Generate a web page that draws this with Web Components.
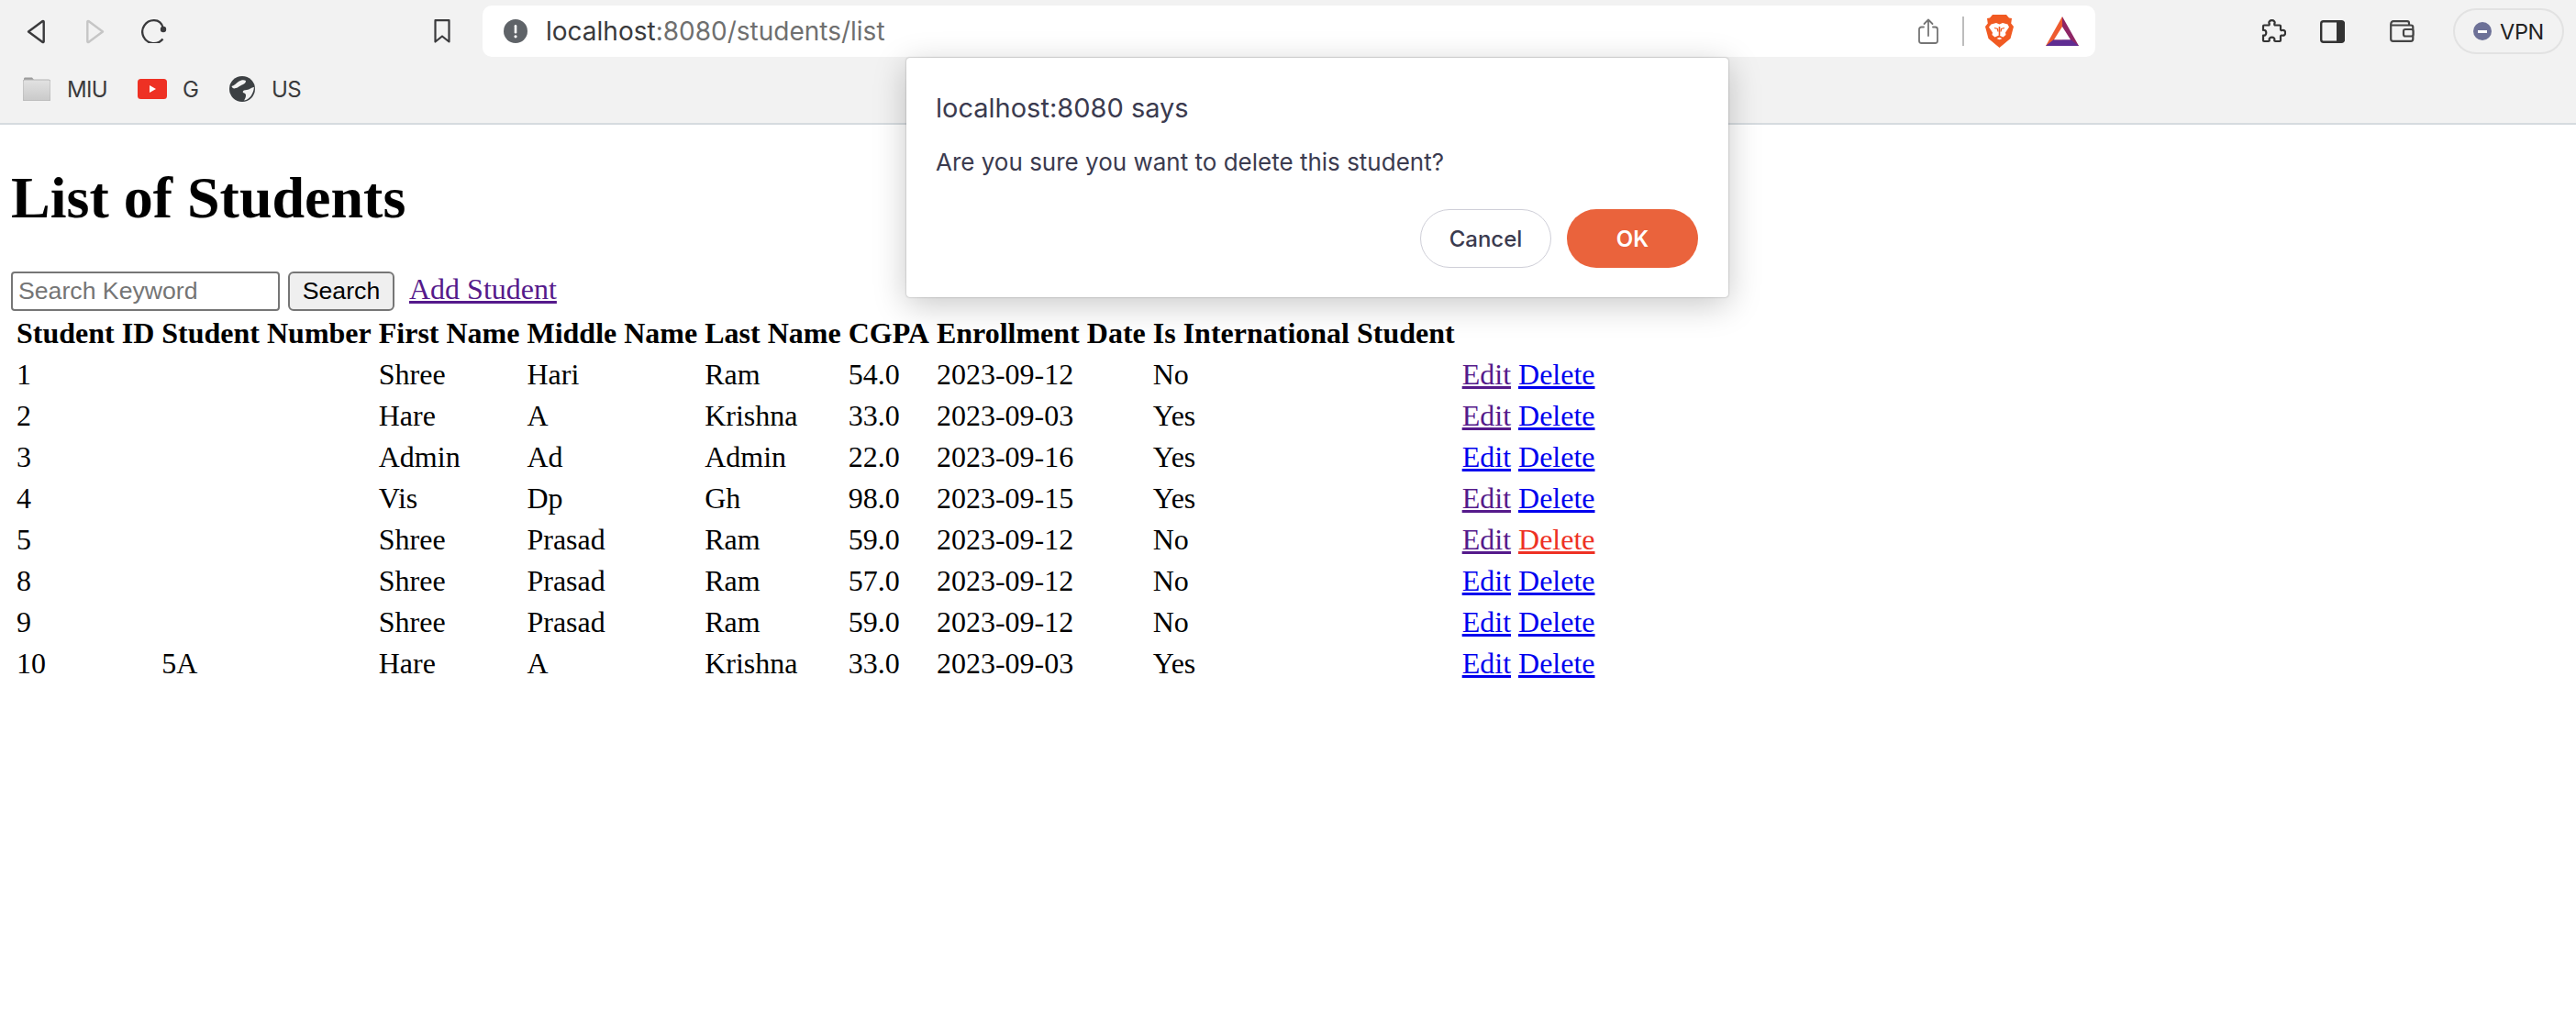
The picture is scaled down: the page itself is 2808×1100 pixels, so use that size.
<!DOCTYPE html>
<html lang="en">
<head>
<meta charset="utf-8">
<title>List of Students</title>
<style>
html, body { margin: 0; padding: 0; background: #fff; }
body { width: 2808px; height: 1100px; overflow: hidden; position: relative; }
</style>
</head>
<body>
<browser-toolbar></browser-toolbar>
<bookmark-bar></bookmark-bar>
<students-page></students-page>
<confirm-dialog origin="localhost:8080 says" message="Are you sure you want to delete this student?"></confirm-dialog>

<script>
// iconos dibujados a mano, viewBox en pixeles reales
const ICONS = {
    back: [20, 27, '<path d="M17.500 2 2 13.500 17.500 25c.6.3 1.200 0 1.200-.7V2.700c0-.7-.6-1-1.200-.7Z" fill="none" stroke="#3a3a3c" stroke-width="2.400" stroke-linejoin="round"/>'],
    forward: [21, 27, '<path d="M3.500 2 19 13.500 3.500 25c-.6.3-1.200 0-1.200-.7V2.700c0-.7.6-1 1.200-.7Z" fill="none" stroke="#c6c6c6" stroke-width="2.400" stroke-linejoin="round"/>'],
    reload: [28, 26, '<path d="M23.500 21.500A12.500 12.500 0 1 1 14 1.200c5 0 8.500 3 10 8.800" fill="none" stroke="#3a3a3c" stroke-width="2.300"/><circle cx="24" cy="11" r="3.200" fill="#3a3a3c"/>'],
    bookmark: [18, 26, '<path d="M1.500 1.200h15v23.300L9 18.500l-7.500 6Z" fill="none" stroke="#3a3a3c" stroke-width="2.200" stroke-linejoin="round"/>'],
    alert: [26, 26, '<circle cx="13" cy="13" r="13" fill="#5f6368"/><rect x="11.700" y="6" width="2.600" height="9.500" rx="1.300" fill="#fff"/><circle cx="13" cy="18.800" r="1.600" fill="#fff"/>'],
    share: [22, 28, '<path d="M6 9.500H3.500C2.100 9.500 1 10.600 1 12v12.500C1 26 2.100 27 3.500 27h15c1.400 0 2.500-1 2.500-2.500V12c0-1.400-1.100-2.500-2.500-2.500H16M11 19V1.500M6.500 6 11 1.500 15.500 6" fill="none" stroke="#757575" stroke-width="1.800" stroke-linecap="round" stroke-linejoin="round"/>'],
    brave: [31, 36, '<path d="M8 0h15l3 3.500 3 .5-.8 5.500L31 13l-3.500 13L15.500 36 3.500 26 0 13l2.800-3.500L2 4l3-.5Z" fill="#f15a22"/><path d="M6.500 10.500 12 9l3.500 1.500L19 9l5.500 1.500 1.500 3-4 6 .5 2.500-3 2.500-4.500-2-4.500 2-3-2.500.5-2.500-4-6Z" fill="#fff"/><path d="M10 14.500l3.500 1 .5 3M21 14.500l-3.500 1-.5 3" fill="none" stroke="#f15a22" stroke-width="1.300"/><path d="M14.700 13h1.600v9.500l-.8.800-.8-.8ZM11 25.500l4.500-2 4.500 2-4.500 4Z" fill="#f15a22"/><path d="M12.500 26l3-1.300 3 1.300-3 1.300Z" fill="#fff"/>'],
    bat: [36, 32, '<path d="M18 0 36 32H18Z" fill="#8e2565"/><path d="M18 0 0 32h18Z" fill="#ee5b2f"/><path d="M8.500 25.300h19L36 32H0Z" fill="#5f2d92"/><path d="M18 11l9 14.300H9Z" fill="#fff"/>'],
    puzzle: [28, 26, '<path d="M4 6.500h4.500c1.200 0 1.500-.8 1-2-.6-1.800.8-3.300 3-3.300s3.600 1.500 3 3.300c-.5 1.200-.2 2 1 2H21c.8 0 1 .4 1 1v3.500c0 1 .8 1.300 1.800 1 2-.6 3.300.8 3.300 2.800s-1.300 3.400-3.300 2.800c-1-.3-1.800 0-1.800 1v4.400c0 .6-.3 1-1 1h-4.500c-1 0-1.500-.6-1.200-1.500.5-1.600-.8-2.800-2.800-2.800s-3.300 1.200-2.800 2.800c.3.900-.2 1.500-1.200 1.500H4c-.7 0-1-.4-1-1v-5.500c2 .6 3.300-.8 3.300-2.800S5 11.300 3 11.900V7.500c0-.6.300-1 1-1Z" fill="none" stroke="#333" stroke-width="2.200" stroke-linejoin="round"/>'],
    sidebar: [27, 25, '<rect x="1.200" y="1.200" width="24.600" height="22.600" rx="2.500" fill="none" stroke="#333" stroke-width="2.400"/><path d="M18 1h6c1.500 0 3 1 3 3v17c0 2-1.500 3-3 3h-6Z" fill="#333"/>'],
    wallet: [27, 24, '<path d="M4 1.200h15c1.300 0 2 .7 2 2v2.300M1.200 4.500c0-2 1.300-3.300 2.800-3.300M1.200 4.500v16c0 1.300 1 2.300 2.300 2.300h19.500c1.300 0 2.300-1 2.300-2.300v-13c0-1.300-1-2-2.300-2H3.500C2 5.500 1.200 5 1.200 4.500Z" fill="none" stroke="#444" stroke-width="2.200"/><rect x="15" y="10" width="10.500" height="7.500" rx="2" fill="#f2f2f2" stroke="#444" stroke-width="2.200"/>'],
    folder: [30, 26, '<defs><linearGradient id="fg" x1="0" y1="0" x2="0" y2="1"><stop offset="0" stop-color="#e2e2e2"/><stop offset="1" stop-color="#c9c9c9"/></linearGradient></defs><path d="M1 2c0-1 .6-1.500 1.500-1.500H10L12 3H1Z" fill="#9c9c9c"/><rect x="0" y="3" width="30" height="23" rx="2" fill="url(#fg)" stroke="#b4b4b4"/>'],
    youtube: [32, 22, '<rect width="32" height="22" rx="3.500" fill="#ee3124"/><path d="M13 7l7 4-7 4Z" fill="#fff"/>'],
    globe: [28, 28, '<circle cx="14" cy="14" r="14" fill="#3c4043"/><path d="M2.500 11C6 10 7 8 10 6c3-2 6-2 8-1 0 3-3 4-5 5-3 1-4 3-6 3-2 1-4 0-4.500-2ZM27 12c-3 0-5 3-8 3s-5 1-4 3c2 1 3 1 3 3s-1 4-2 5.500c6-1 10-6.500 11-14.500Z" fill="#f2f2f2"/>']
};

class ToolIcon extends HTMLElement {
    constructor() {
        super();
        this.attachShadow({ mode: 'open' });
    }
    connectedCallback() {
        const [w, h, body] = ICONS[this.getAttribute('name')];
        this.shadowRoot.innerHTML = `
            <style>
                :host { display: block; flex: none; line-height: 0; width: ${w}px; height: ${h}px; }
            </style>
            <svg width="${w}" height="${h}" viewBox="0 0 ${w} ${h}">${body}</svg>
        `;
    }
}
customElements.define('tool-icon', ToolIcon);

class BrowserToolbar extends HTMLElement {
    constructor() {
        super();
        this.attachShadow({ mode: 'open' });
    }
    connectedCallback() {
        this.shadowRoot.innerHTML = `
            <style>
                :host { display: flex; align-items: center; height: 68px; background: #f2f2f2; padding-left: 29px; box-sizing: border-box; width: 2808px; }
                .address { display: flex; align-items: center; width: 1758px; height: 56px; margin-left: 35px; background: #fff; border-radius: 10px; box-sizing: border-box; padding-left: 23px; }
                .url { margin-left: 20px; font: 28px Inter, sans-serif; color: #6f6f6f; white-space: nowrap; }
                .url b { font-weight: 400; color: #3a3a3c; }
                .sep { width: 2px; height: 32px; background: #bdbdbd; margin-left: 26px; }
                .vpn { display: flex; align-items: center; box-sizing: border-box; width: 121px; height: 50px; margin-left: 42px; padding-left: 20px; border: 2px solid #e2e2e2; border-radius: 25px; font: 23.5px Inter, sans-serif; letter-spacing: -.3px; color: #222; }
                .dot { width: 20px; height: 20px; border-radius: 50%; background: #6d7197; margin-right: 9px; display: flex; align-items: center; justify-content: center; }
                .dot i { display: block; width: 10px; height: 3px; background: #fff; }
            </style>
            <tool-icon name="back"></tool-icon>
            <tool-icon name="forward" style="margin-left:44px"></tool-icon>
            <tool-icon name="reload" style="margin-left:40px"></tool-icon>
            <tool-icon name="bookmark" style="margin-left:291px"></tool-icon>
            <div class="address">
                <tool-icon name="alert"></tool-icon>
                <span class="url"><b>localhost</b>:8080/students/list</span>
                <tool-icon name="share" style="margin-left:auto"></tool-icon>
                <div class="sep"></div>
                <tool-icon name="brave" style="margin-left:23px"></tool-icon>
                <tool-icon name="bat" style="margin-left:35px;margin-right:18px"></tool-icon>
            </div>
            <tool-icon name="puzzle" style="margin-left:180px"></tool-icon>
            <tool-icon name="sidebar" style="margin-left:37px"></tool-icon>
            <tool-icon name="wallet" style="margin-left:49px"></tool-icon>
            <div class="vpn"><span class="dot"><i></i></span>VPN</div>
        `;
    }
}
customElements.define('browser-toolbar', BrowserToolbar);

class BookmarkBar extends HTMLElement {
    constructor() {
        super();
        this.attachShadow({ mode: 'open' });
    }
    connectedCallback() {
        this.shadowRoot.innerHTML = `
            <style>
                :host { display: flex; align-items: center; height: 68px; background: #f2f2f2; border-bottom: 2px solid #d6dbdf; box-sizing: border-box; padding: 0 0 8px 25px; font: 24px Inter, sans-serif; letter-spacing: -.7px; color: #3a3a3c; width: 2808px; }
                span { margin-left: 18px; }
            </style>
            <tool-icon name="folder"></tool-icon><span>MIU</span>
            <tool-icon name="youtube" style="margin-left:33px"></tool-icon><span style="margin-left:17px">G</span>
            <tool-icon name="globe" style="margin-left:34px"></tool-icon><span style="margin-left:18px">US</span>
        `;
    }
}
customElements.define('bookmark-bar', BookmarkBar);

class SearchForm extends HTMLElement {
    constructor() {
        super();
        this.attachShadow({ mode: 'open' });
    }
    connectedCallback() {
        this.shadowRoot.innerHTML = `
            <style>
                :host { display: flex; align-items: baseline; }
                input, button { font: 26.67px "Liberation Sans", Arial, sans-serif; height: 43px; box-sizing: border-box; border: 2px solid #767676; margin: 0; }
                input { width: 293px; padding: 2px 6px; border-radius: 4px; background: #fff; }
                input::placeholder { color: #757575; opacity: 1; }
                button { width: 116px; margin-left: 9px; padding: 0; background: #efefef; border-radius: 6px; color: #000; }
                a { margin-left: 16px; font: 32px "Liberation Serif", "Times New Roman", serif; color: #551a8b; }
            </style>
            <input type="text" placeholder="Search Keyword">
            <button type="button">Search</button>
            <a href="#add">Add Student</a>
        `;
    }
}
customElements.define('search-form', SearchForm);

const STUDENTS = [
    ['1', '', 'Shree', 'Hari', 'Ram', '54.0', '2023-09-12', 'No', 'v', 'l'],
    ['2', '', 'Hare', 'A', 'Krishna', '33.0', '2023-09-03', 'Yes', 'v', 'l'],
    ['3', '', 'Admin', 'Ad', 'Admin', '22.0', '2023-09-16', 'Yes', 'l', 'l'],
    ['4', '', 'Vis', 'Dp', 'Gh', '98.0', '2023-09-15', 'Yes', 'v', 'l'],
    ['5', '', 'Shree', 'Prasad', 'Ram', '59.0', '2023-09-12', 'No', 'v', 'a'],
    ['8', '', 'Shree', 'Prasad', 'Ram', '57.0', '2023-09-12', 'No', 'l', 'l'],
    ['9', '', 'Shree', 'Prasad', 'Ram', '59.0', '2023-09-12', 'No', 'l', 'l'],
    ['10', '5A', 'Hare', 'A', 'Krishna', '33.0', '2023-09-03', 'Yes', 'l', 'l']
];
const HEADERS = ['Student ID', 'Student Number', 'First Name', 'Middle Name', 'Last Name', 'CGPA', 'Enrollment Date', 'Is International Student', ''];

class StudentTable extends HTMLElement {
    constructor() {
        super();
        this.attachShadow({ mode: 'open' });
    }
    connectedCallback() {
        const rows = STUDENTS.map(s => `
            <tr>
                ${s.slice(0, 8).map(v => `<td>${v}</td>`).join('')}
                <td><a class="${s[8]}" href="#edit">Edit</a> <a class="${s[9]}" href="#delete">Delete</a></td>
            </tr>`).join('');
        this.shadowRoot.innerHTML = `
            <style>
                :host { display: block; }
                table { border-collapse: separate; border-spacing: 4px; font: 32px "Liberation Serif", "Times New Roman", serif; color: #000; }
                th, td { padding: 2px; text-align: left; white-space: nowrap; }
                th { font-weight: 700; }
                a.l { color: #0000ee; }
                a.v { color: #551a8b; }
                a.a { color: #ee3124; }
            </style>
            <table>
                <thead><tr>${HEADERS.map(h => `<th>${h}</th>`).join('')}</tr></thead>
                <tbody>${rows}</tbody>
            </table>
        `;
    }
}
customElements.define('student-table', StudentTable);

class StudentsPage extends HTMLElement {
    constructor() {
        super();
        this.attachShadow({ mode: 'open' });
    }
    connectedCallback() {
        this.shadowRoot.innerHTML = `
            <style>
                :host { display: block; padding: 0 12px; }
                h1 { font: 700 64px "Liberation Serif", "Times New Roman", serif; margin: 43px 0; padding: 0; color: #000; }
            </style>
            <h1>List of Students</h1>
            <search-form></search-form>
            <student-table></student-table>
        `;
    }
}
customElements.define('students-page', StudentsPage);

class ConfirmDialog extends HTMLElement {
    constructor() {
        super();
        this.attachShadow({ mode: 'open' });
    }
    connectedCallback() {
        this.shadowRoot.innerHTML = `
            <style>
                :host { display: block; position: absolute; left: 988px; top: 63px; width: 896px; height: 261px; box-sizing: border-box; padding: 38px 33px 32px 32px; background: #fff; border-radius: 4px; box-shadow: 0 0 2px rgba(0,0,0,.35), 0 8px 36px rgba(0,0,0,.22); font-family: Inter, sans-serif; color: #3b3b4f; display: flex; flex-direction: column; }
                .origin { font-size: 29px; line-height: 34px; }
                .message { font-size: 26px; line-height: 32px; margin-top: 26px; }
                .actions { display: flex; justify-content: flex-end; gap: 17px; margin-top: auto; }
                button { width: 143px; height: 64px; border-radius: 32px; font: 600 24px Inter, sans-serif; box-sizing: border-box; padding: 0; }
                .cancel { background: #fff; border: 1.5px solid #cfcfd8; color: #3b3b4f; font-weight: 500; }
                .ok { background: #ea633c; border: 0; color: #fff; }
            </style>
            <div class="origin">${this.getAttribute('origin')}</div>
            <div class="message">${this.getAttribute('message')}</div>
            <div class="actions">
                <button class="cancel" type="button">Cancel</button>
                <button class="ok" type="button">OK</button>
            </div>
        `;
    }
}
customElements.define('confirm-dialog', ConfirmDialog);
</script>
</body>
</html>
